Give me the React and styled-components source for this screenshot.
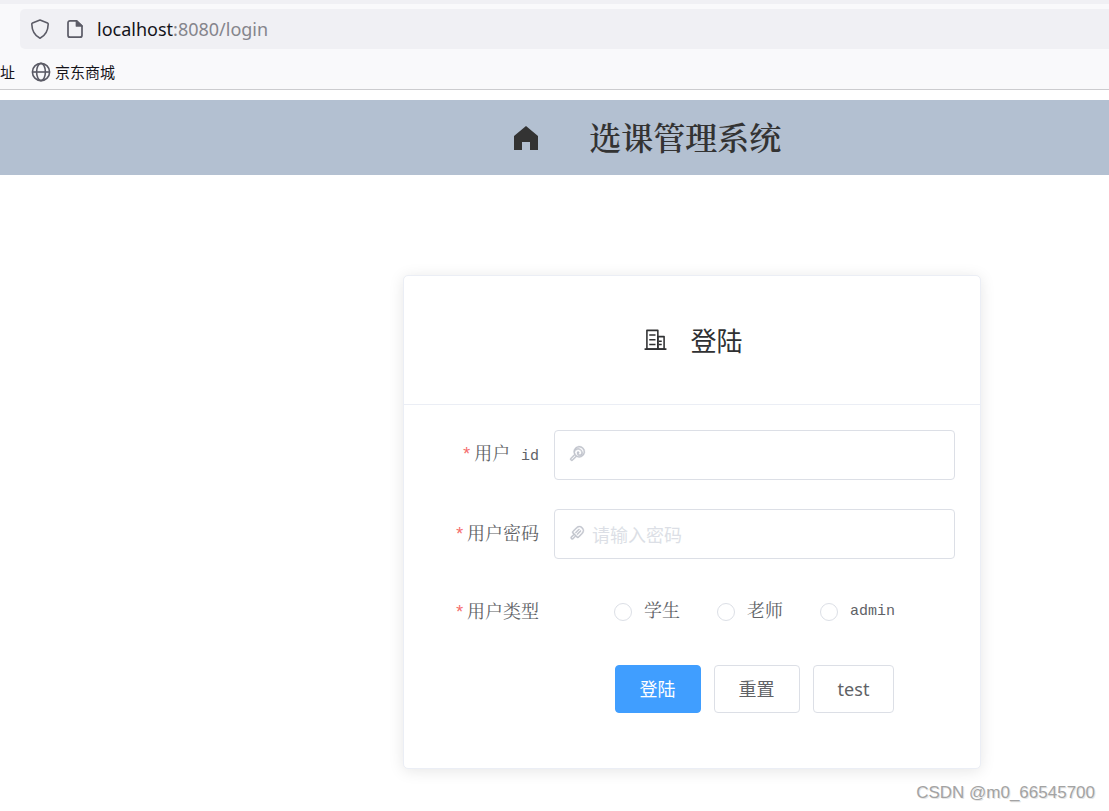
import React from "react";
import styled, { createGlobalStyle } from "styled-components";

const cjk = '"Noto Sans CJK SC", sans-serif';
const song = '"Noto Serif CJK SC", "Noto Sans CJK SC", serif';

const GlobalStyle = createGlobalStyle`
  *, *::before, *::after { box-sizing: border-box; }
  body {
    margin: 0;
    background: #fff;
    color: #303133;
    font-family: "Open Sans", ${cjk};
  }
`;

const Browser = styled.header`
  border-top: 4px solid #f0f0f4;
  border-bottom: 1px solid #cccccf;
  background: #f9f9fb;
  padding-top: 5px;
`;

const AddressBar = styled.div`
  display: flex;
  align-items: center;
  height: 40px;
  margin-left: 20px;
  padding-left: 10px;
  gap: 15px;
  border-radius: 5px 0 0 5px;
  background: #f0f0f4;
`;

const Address = styled.span`
  margin-left: -3px;
  font-family: "Noto Sans", sans-serif;
  font-size: 18px;
  line-height: 24px;
  color: #85858c;
`;

const Host = styled.span`
  color: #15141a;
`;

const Bookmarks = styled.nav`
  display: flex;
  align-items: center;
  gap: 16px;
  height: 40px;
  padding-top: 6px;
`;

const Bookmark = styled.a`
  display: flex;
  align-items: center;
  gap: 4px;
  font-family: ${cjk};
  font-size: 15px;
  line-height: 20px;
  color: #15141a;
  text-decoration: none;
`;

const Banner = styled.div`
  display: flex;
  align-items: center;
  gap: 47px;
  height: 75px;
  margin-top: 10px;
  padding-left: 46%;
  background: #b3c0d1;
  color: #333;
`;

const BannerTitle = styled.h1`
  margin: 0;
  padding-bottom: 4px;
  font-family: ${song};
  font-size: 32px;
  font-weight: 600;
  line-height: 40px;
  white-space: nowrap;
`;

const Page = styled.main`
  padding: 100px 128px 42px 403px;
`;

const Card = styled.section`
  border: 1px solid #ebeef5;
  border-radius: 5px;
  background: #fff;
  box-shadow: 0 2px 15px rgba(0, 0, 0, 0.1);
`;

const CardHeader = styled.div`
  display: flex;
  align-items: center;
  justify-content: center;
  gap: 22px;
  height: 129px;
  padding-left: 2px;
  border-bottom: 1px solid #ebeef5;
`;

const CardTitle = styled.h2`
  margin: 0;
  font-family: ${cjk};
  font-size: 26px;
  font-weight: 400;
  line-height: 36px;
`;

const Form = styled.form`
  display: flex;
  flex-direction: column;
  gap: 29px;
  padding: 25px 25px 55px;
`;

const Row = styled.div`
  display: grid;
  grid-template-columns: 110px 1fr;
  column-gap: 15px;
  align-items: center;
  height: ${(p) => (p.$compact ? 48 : 50)}px;
`;

const labelText = `
  font-family: "Liberation Mono", ${song};
  font-size: 18px;
  font-weight: 400;
  line-height: 24px;
  color: #606266;
`;

const Label = styled.label`
  ${labelText}
  padding-top: 2px;
  text-align: right;
  white-space: nowrap;

  &::before {
    content: "*";
    margin-right: 2px;
    color: #f56c6c;
  }
`;

const Latin = styled.span`
  font-size: 15px;
`;

const Field = styled.div`
  display: flex;
  align-items: center;
  gap: 6px;
  height: 50px;
  padding: 0 13px;
  border: 1px solid #dcdfe6;
  border-radius: 4px;
  color: #c0c4cc;
`;

const Input = styled.input`
  flex: 1;
  min-width: 0;
  height: 24px;
  padding: 0;
  border: 0;
  outline: 0;
  background: transparent;
  font-family: ${cjk};
  font-size: 18px;
  font-weight: 400;
  line-height: 24px;
  color: #606266;

  &::placeholder { color: #dcdfe6; opacity: 1; }
`;

const Choices = styled.div`
  display: flex;
  justify-content: center;
  gap: ${(p) => p.$gap}px;
  grid-column: 2;
`;

const Choice = styled.label`
  ${labelText}
  display: flex;
  align-items: center;
  gap: 12px;
  white-space: nowrap;
`;

const Radio = styled.input`
  appearance: none;
  width: 18px;
  height: 18px;
  margin: 0;
  border: 1px solid #dcdfe6;
  border-radius: 50%;
  background: #fff;

  &:checked { border: 5px solid #409eff; }
`;

const Button = styled.button`
  height: 48px;
  padding: 0 24px;
  border: 1px solid ${(p) => (p.$primary ? "#409eff" : "#dcdfe6")};
  border-radius: 4px;
  background: ${(p) => (p.$primary ? "#409eff" : "#fff")};
  color: ${(p) => (p.$primary ? "#fff" : "#606266")};
  font-family: "Noto Sans", ${cjk};
  font-size: 18px;
  line-height: 24px;
  cursor: pointer;
`;

const Watermark = styled.div`
  position: absolute;
  right: 14px;
  bottom: 8px;
  font-family: "Liberation Sans", sans-serif;
  font-size: 17px;
  line-height: 20px;
  color: #a3a3a3;
  text-shadow: 1px 1px 0 #e6e6e6;
`;

const PageWrap = styled.div`
  position: relative;
`;

const shapes = {
  home: ["M512 128 128 447.936V896h255.936V640H640v256h255.936V447.936z"],
  building: [
    "M192 128v704h384V128zm-32-64h448a32 32 0 0 1 32 32v768a32 32 0 0 1-32 32H160a32 32 0 0 1-32-32V96a32 32 0 0 1 32-32",
    "M256 256h256v64H256zm0 192h256v64H256zm0 192h256v64H256zm384-128h128v64H640zm0 128h128v64H640zM64 832h896v64H64z",
    "M640 384v448h192V384zm-32-64h256a32 32 0 0 1 32 32v512a32 32 0 0 1-32 32H608a32 32 0 0 1-32-32V352a32 32 0 0 1 32-32",
  ],
  lollipop: [
    "M513.28 448a64 64 0 1 1 76.544 49.728A96 96 0 0 0 768 448h64a160 160 0 0 1-320 0zm-126.976-29.696a256 256 0 1 0 43.52-180.48A256 256 0 0 1 832 448h-64a192 192 0 0 0-381.696-29.696m105.664 249.472L285.696 874.048a96 96 0 0 1-135.68-135.744l206.208-206.272a320 320 0 1 1 135.744 135.744zm-54.464-36.032a321.92 321.92 0 0 1-45.248-45.248L195.2 783.552a32 32 0 1 0 45.248 45.248l197.056-197.12z",
  ],
  iceCream: [
    "m308.352 489.344 226.304 226.304a32 32 0 0 0 45.248 0L783.552 512A192 192 0 1 0 512 240.448L308.352 444.16a32 32 0 0 0 0 45.248zm135.744 226.304L308.352 851.392a96 96 0 0 1-135.744-135.744l135.744-135.744-45.248-45.248a96 96 0 0 1 0-135.808L466.752 195.2A256 256 0 0 1 828.8 557.248L625.152 760.96a96 96 0 0 1-135.808 0l-45.248-45.248zM398.848 670.4 353.6 625.152 217.856 760.896a32 32 0 0 0 45.248 45.248zm248.96-384.64a32 32 0 0 1 0 45.248L466.624 512a32 32 0 1 1-45.184-45.248l180.992-181.056a32 32 0 0 1 45.248 0zm90.496 90.496a32 32 0 0 1 0 45.248L557.248 602.496A32 32 0 1 1 512 557.248l180.992-180.992a32 32 0 0 1 45.312 0z",
  ],
};

const Svg = styled.svg`
  display: block;
  flex: none;
`;

const FieldSvg = styled(Svg)`
  margin-bottom: 2px;
  stroke: currentColor;
  stroke-width: 24;
`;

function Icon({ name, size, as: Shape = Svg }) {
  return (
    <Shape width={size} height={size} viewBox="0 0 1024 1024" fill="currentColor" aria-hidden="true">
      {shapes[name].map((d) => (
        <path key={d} d={d} />
      ))}
    </Shape>
  );
}

function ShieldIcon() {
  return (
    <Svg width="20" height="20" viewBox="0 0 20 20" fill="none" stroke="#5b5b66" strokeWidth="1.6" strokeLinejoin="round" aria-hidden="true">
      <path d="M10 1 L17.5 4 Q18.3 4.3 18.2 5.2 C18 12 15.5 16.5 10 19.2 C4.5 16.5 2 12 1.8 5.2 Q1.7 4.3 2.5 4 Z" />
    </Svg>
  );
}

function PageIcon() {
  return (
    <Svg width="20" height="20" viewBox="0 0 20 20" fill="none" stroke="#5b5b66" strokeWidth="1.7" strokeLinejoin="round" aria-hidden="true">
      <path d="M11.5 1.8H5a2 2 0 0 0-2 2v12.4a2 2 0 0 0 2 2h10a2 2 0 0 0 2-2V7z" />
      <path d="M11.5 1.8V7H17z" fill="#5b5b66" />
    </Svg>
  );
}

function GlobeIcon() {
  return (
    <Svg width="20" height="20" viewBox="0 0 20 20" fill="none" stroke="#5b5b66" strokeWidth="1.6" aria-hidden="true">
      <circle cx="10" cy="10" r="8.6" />
      <ellipse cx="10" cy="10" rx="4.4" ry="8.6" />
      <path d="M1.4 10h17.2" />
    </Svg>
  );
}

export default function App() {
  return (
    <PageWrap>
      <GlobalStyle />
      <Browser>
        <AddressBar>
          <ShieldIcon />
          <PageIcon />
          <Address>
            <Host>localhost</Host>:8080/login
          </Address>
        </AddressBar>
        <Bookmarks>
          <Bookmark href="#">址</Bookmark>
          <Bookmark href="#">
            <GlobeIcon />
            京东商城
          </Bookmark>
        </Bookmarks>
      </Browser>
      <Banner>
        <Icon name="home" size={32} />
        <BannerTitle>选课管理系统</BannerTitle>
      </Banner>
      <Page>
        <Card>
          <CardHeader>
            <Icon name="building" size={25} />
            <CardTitle>登陆</CardTitle>
          </CardHeader>
          <Form onSubmit={(e) => e.preventDefault()}>
            <Row>
              <Label htmlFor="user-id">
                用户 <Latin>id</Latin>
              </Label>
              <Field>
                <Icon name="lollipop" size={18} as={FieldSvg} />
                <Input id="user-id" type="text" />
              </Field>
            </Row>
            <Row>
              <Label htmlFor="password">用户密码</Label>
              <Field>
                <Icon name="iceCream" size={18} as={FieldSvg} />
                <Input id="password" type="password" placeholder="请输入密码" />
              </Field>
            </Row>
            <Row $compact role="radiogroup" aria-labelledby="type-label">
              <Label as="span" id="type-label">用户类型</Label>
              <Choices $gap={37}>
                <Choice>
                  <Radio type="radio" name="type" value="student" />
                  学生
                </Choice>
                <Choice>
                  <Radio type="radio" name="type" value="teacher" />
                  老师
                </Choice>
                <Choice>
                  <Radio type="radio" name="type" value="admin" />
                  <Latin>admin</Latin>
                </Choice>
              </Choices>
            </Row>
            <Row $compact>
              <Choices $gap={13}>
                <Button type="submit" $primary>登陆</Button>
                <Button type="reset">重置</Button>
                <Button type="button">test</Button>
              </Choices>
            </Row>
          </Form>
        </Card>
      </Page>
      <Watermark>CSDN @m0_66545700</Watermark>
    </PageWrap>
  );
}
